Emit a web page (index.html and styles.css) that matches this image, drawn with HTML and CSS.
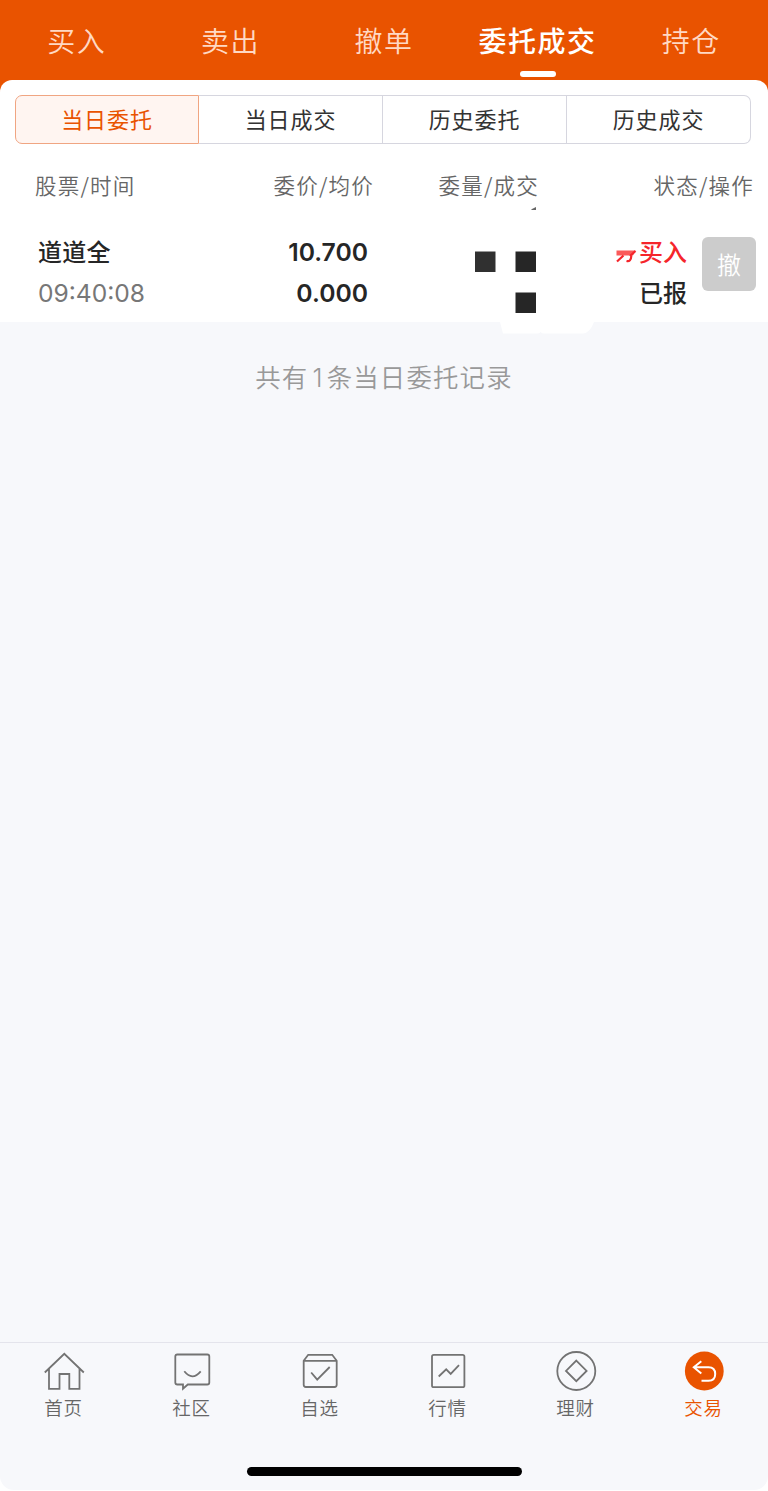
FILE: index.html
```html
<!DOCTYPE html>
<html lang="zh-CN">
<head>
    <meta charset="UTF-8">
    <meta name="viewport" content="width=device-width, initial-scale=1.0">
    <title>委托成交</title>
    <link rel="stylesheet" href="styles.css">
</head>
<body>

<div class="app">
    <nav class="top-tabs">
        <a class="top-tab">买入</a>
        <a class="top-tab">卖出</a>
        <a class="top-tab">撤单</a>
        <a class="top-tab active">委托成交</a>
        <a class="top-tab">持仓</a>
    </nav>

    <div class="card-wrap">
        <section class="card">
            <div class="segments">
                <div class="segment active">当日委托</div>
                <div class="segment">当日成交</div>
                <div class="segment">历史委托</div>
                <div class="segment">历史成交</div>
            </div>

            <div class="list-head">
                <span>股票/时间</span>
                <span>委价/均价</span>
                <span>委量/成交</span>
                <span>状态/操作</span>
            </div>

            <div class="order">
                <div class="stock">
                    <div class="name">道道全</div>
                    <div class="time">09:40:08</div>
                </div>
                <div class="price">
                    <div>10.700</div>
                    <div>0.000</div>
                </div>
                <div class="amount">
                    <svg width="70" height="108" viewBox="0 0 70 108">
                        <path d="M65 2l-5 2.500 1 .5h4z" fill="#666"/>
                        <path d="M4 46.500h20.500v20.500h-20.500z" fill="#303030"/>
                        <path d="M44.500 46.500h20.500v20.500h-20.500zM44.500 87.500h20.500v20.500h-20.500z" fill="#262626"/>
                    </svg>
                </div>
                <div class="status">
                    <div class="buy">
                        <svg width="24" height="16" viewBox="0 0 24 16">
                            <path d="M1.500 7.500h19l-2.500 5h-16.500z" fill="#fa5a5a"/>
                            <path d="M8.500 12.500l-6.500 6M20.500 8l-5.500 5" fill="none" stroke="#f5252b" stroke-width="2.200"/>
                            <path d="M11.500 18q4.500 1 4.800-5" fill="none" stroke="#f5252b" stroke-width="2.200"/>
                        </svg>
                        <span>买入</span>
                    </div>
                    <div>已报</div>
                </div>
                <button class="cancel-button">撤</button>
            </div>
        </section>
        <svg class="card-edge" width="94" height="12" viewBox="0 0 94 12">
            <path d="M0 0h94q-4 11-11 11.500h-39q-2 0-3.500-1.500-1 1.500-3 1.500h-34.500z" fill="#fff"/>
        </svg>
    </div>

    <p class="summary">共有<span class="count">1</span>条当日委托记录</p>

    <nav class="bottom-nav">
        <a class="nav-item">
            <svg width="40" height="40" viewBox="0 0 40 40">
                <path d="M.8 20.500L20.300 1.800l19.500 18.700M5 17v19.800h10.500v-14.800h9.800v14.800h10.200v-19.800"/>
            </svg>
            <span>首页</span>
        </a>
        <a class="nav-item">
            <svg width="40" height="40" viewBox="0 0 40 40">
                <path d="M5.300 2.500h30q2 0 2 2v26q0 2-2 2h-19.500l-4.800 4.200v-4.200h-5.700q-2 0-2-2v-26q0-2 2-2zM12.300 19.300q8 10 16.400 0"/>
            </svg>
            <span>社区</span>
        </a>
        <a class="nav-item">
            <svg width="40" height="40" viewBox="0 0 40 40">
                <path d="M3.700 8.800l4.500-6h24l4.500 6v24q0 2.200-2.200 2.200h-28.600q-2.200 0-2.200-2.200zM3.700 8.800h33M11.200 20.500l6 7.200 12.500-12.700"/>
            </svg>
            <span>自选</span>
        </a>
        <a class="nav-item">
            <svg width="40" height="40" viewBox="0 0 40 40">
                <rect x="4" y="2.800" width="32.400" height="32.400" rx="1.800"/>
                <path d="M10.700 24.500l7.500-7.200 4.500 4.600 8.300-8.800"/>
            </svg>
            <span>行情</span>
        </a>
        <a class="nav-item">
            <svg width="40" height="40" viewBox="0 0 40 40">
                <circle cx="20.300" cy="19" r="19"/>
                <path d="M20.300 8.600l10.300 10.300-10.300 10.300-10.300-10.300z"/>
            </svg>
            <span>理财</span>
        </a>
        <a class="nav-item active">
            <svg width="40" height="40" viewBox="0 0 40 40">
                <circle class="disc" cx="20.300" cy="19" r="19.400"/>
                <path class="arrow" d="M17.300 9.300l-7.500 5.900 7.500 6.300M10 15.200h14.500q6.700 0 6.700 6.700t-6.700 6.900h-7"/>
            </svg>
            <span>交易</span>
        </a>
    </nav>
    <div class="home-bar"></div>
</div>

</body>
</html>
```
FILE: styles.css
```css
* {
    box-sizing: border-box;
}
body {
    margin: 0;
    background-color: #fff;
    color: #262626;
    font-family: "Noto Sans CJK SC", sans-serif;
}
.app {
    display: flex;
    flex-direction: column;
    height: 1490px;
    background-color: #f7f8fb;
    border-radius: 0 0 14px 14px;
    overflow: hidden;
}
.top-tabs {
    display: grid;
    grid-template-columns: repeat(5, 1fr);
    height: 96px;
    flex: none;
    background-color: #e95300;
}
.top-tab {
    display: flex;
    flex-direction: column;
    align-items: center;
    color: #ffd9c4;
    font-size: 28px;
    font-weight: 350;
    line-height: 40px;
    letter-spacing: 1.5px;
    padding-top: 20px;
}
.top-tab.active {
    color: #fff;
    font-weight: 500;
}
.top-tab.active::after {
    content: "";
    width: 36px;
    height: 6px;
    margin-top: 11px;
    border-radius: 3px;
    background-color: #fff;
}
.card-wrap {
    position: relative;
    flex: none;
    margin-top: -16px;
}
.card {
    height: 242px;
    padding-top: 15px;
    background-color: #fff;
    border-radius: 12px 12px 0 0;
}
.card-edge {
    position: absolute;
    top: 242px;
    left: 500px;
}
.segments {
    display: grid;
    grid-template-columns: repeat(4, 1fr);
    height: 49px;
    margin: 0 17px 0 15px;
}
.segment {
    border: solid #d6d6df;
    border-width: 1px 1px 1px 0;
    color: #333;
    font-size: 22px;
    line-height: 44px;
    letter-spacing: 0.9px;
    text-align: center;
}
.segment:last-child {
    border-radius: 0 7px 7px 0;
}
.segment.active {
    border-color: #f0a582;
    border-left-width: 1px;
    border-radius: 7px 0 0 7px;
    background-color: #fff5f1;
    color: #e95300;
}
.list-head {
    display: grid;
    grid-template-columns: 174px 165px 165px 215px;
    margin: 26px 0 0 35px;
    color: #666;
    font-size: 21.5px;
    font-weight: 350;
    line-height: 30px;
    letter-spacing: 1.2px;
    text-align: right;
}
.list-head span:first-child {
    text-align: left;
}
.order {
    display: flex;
    height: 118px;
    padding: 30px 12px 0 38px;
    font-size: 24px;
    font-weight: 500;
    line-height: 41px;
}
.stock {
    width: 170px;
}
.name {
    letter-spacing: 0.3px;
}
.time {
    padding-top: 2px;
    color: #777;
    font-family: Inter, sans-serif;
    font-size: 24.6px;
    font-weight: 400;
}
.price {
    width: 160px;
    padding-top: 2px;
    font-family: Inter, sans-serif;
    font-size: 24.7px;
    font-weight: 600;
    text-align: right;
}
.amount {
    width: 168px;
    margin-top: -25px;
}
.amount svg {
    display: block;
    margin-left: 103px;
}
.status {
    width: 151px;
    text-align: right;
}
.buy {
    display: flex;
    justify-content: flex-end;
    align-items: center;
    color: #f5252b;
}
.buy svg {
    overflow: visible;
}
.cancel-button {
    width: 54px;
    height: 54px;
    margin: 7px 0 0 15px;
    padding: 0;
    border: none;
    border-radius: 6px;
    background-color: #ccc;
    color: #fff;
    font: 350 24px/54px "Noto Sans CJK SC", sans-serif;
}
.summary {
    margin: 35px 0 0;
    color: #999;
    font-size: 25.4px;
    font-weight: 350;
    line-height: 38px;
    letter-spacing: 1.2px;
    text-align: center;
}
.count {
    margin: 0 3px 0 4px;
    font-family: Inter, sans-serif;
}
.bottom-nav {
    display: grid;
    grid-template-columns: repeat(6, 1fr);
    height: 125px;
    margin-top: auto;
    padding-top: 9px;
    border-top: 1px solid #e4e4ec;
}
.nav-item {
    display: flex;
    flex-direction: column;
    align-items: center;
    color: #666;
    font-size: 18.5px;
    font-weight: 350;
    line-height: 26px;
    letter-spacing: 0.8px;
}
.nav-item span {
    margin-right: 1px;
}
.nav-item svg {
    margin-bottom: 2px;
    overflow: visible;
    fill: none;
    stroke: #737373;
    stroke-width: 1.8;
}
.nav-item.active {
    color: #e95300;
}
.nav-item .disc {
    fill: #e95300;
    stroke: none;
}
.nav-item .arrow {
    stroke: #fff;
    stroke-width: 2;
}
.home-bar {
    width: 275px;
    height: 9px;
    flex: none;
    margin: 0 0 14px 247px;
    border-radius: 5px;
    background-color: #000;
}
```
